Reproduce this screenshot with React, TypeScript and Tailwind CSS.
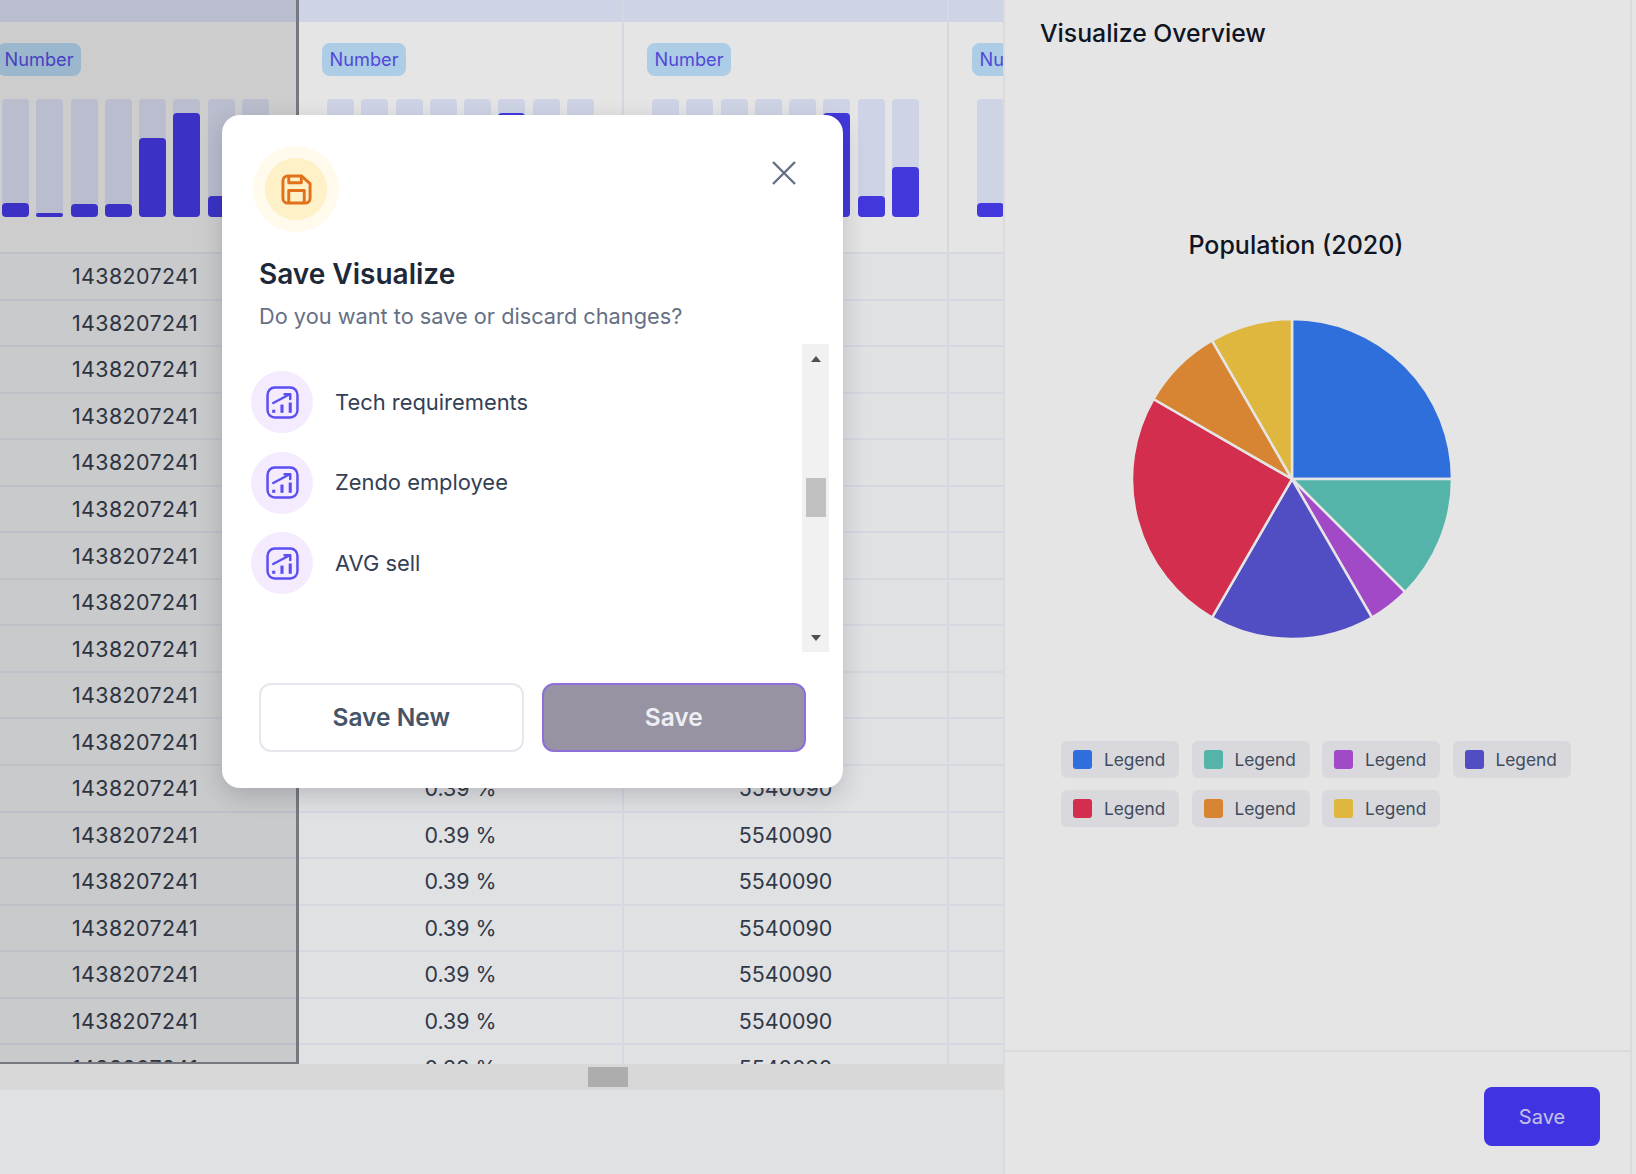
const rowCount = 18;

const columns = [
  { value: "1438207241", bars: [14, 4, 13, 13, 79, 104, 21, 10], frozen: true },
  { value: "0.39 %", bars: [6, 4, 8, 5, 3, 104, 30, 12], frozen: false },
  { value: "5540090", bars: [6, 4, 8, 5, 3, 104, 21, 50], frozen: false },
  { value: "", bars: [14, 4, 13, 13, 40, 60, 21, 10], frozen: false },
];

const slices = [
  { from: 0, to: 90, color: "#357cf5" },
  { from: 90, to: 135, color: "#5ec9be" },
  { from: 135, to: 150, color: "#b452de" },
  { from: 150, to: 210, color: "#5b56d8" },
  { from: 210, to: 300, color: "#ec3457" },
  { from: 300, to: 330, color: "#f09538" },
  { from: 330, to: 360, color: "#f9cb46" },
];

const legend = [
  "bg-[#357cf5]",
  "bg-[#5ec9be]",
  "bg-[#b452de]",
  "bg-[#5b56d8]",
  "bg-[#ec3457]",
  "bg-[#f09538]",
  "bg-[#f9cb46]",
];

const items = ["Tech requirements", "Zendo employee", "AVG sell"];

function slicePath(from: number, to: number) {
  const r = 160;
  const c = 162;
  const point = (deg: number) => {
    const rad = (deg * Math.PI) / 180;
    return `${c + r * Math.sin(rad)} ${c - r * Math.cos(rad)}`;
  };
  return `M${c} ${c} L${point(from)} A${r} ${r} 0 0 1 ${point(to)} Z`;
}

function Column({ value, bars, frozen }: { value: string; bars: number[]; frozen: boolean }) {
  return (
    <div
      className={
        frozen
          ? "relative h-[1064px] w-[325px] shrink-0 overflow-hidden border-r-[3px] border-b-2 border-[#85868e] tracking-[0.4px]"
          : "relative h-[1064px] w-[325px] shrink-0 overflow-hidden border-r-2 border-[#eef0fb]"
      }
    >
      <div className="h-[22px] bg-[#e6ebff]" />
      <div className="h-[232px] border-b-2 border-[#eef0fb] bg-white pt-[21px] pl-[23px]">
        <span className="inline-flex h-[33px] w-[84px] items-center justify-center rounded-lg bg-[#c1e4ff] text-[18.2px] tracking-normal text-[#5a52f2]">
          Number
        </span>
        <div className="mt-[23px] ml-[5px] flex gap-[7.3px]">
          {bars.map((h, i) => (
            <div key={i} className="flex h-[118px] w-[27px] flex-col justify-end rounded-sm bg-[#e6ebff]">
              <div className="rounded-sm bg-[#4a3ff5]" style={{ height: h }} />
            </div>
          ))}
        </div>
      </div>
      {Array.from({ length: rowCount }).map((_, i) => (
        <div
          key={i}
          className="flex h-[46.55px] items-center justify-center border-b-2 border-[#eef0fb] bg-[#fafbfd] text-[21.4px] text-[#374151]"
        >
          {value}
        </div>
      ))}
      {frozen && <div className="absolute inset-0 bg-black/10" />}
    </div>
  );
}

function ChartIcon() {
  return (
    <svg viewBox="0 0 32 32" className="h-[33px] w-[33px]" fill="none" stroke="#5b4ff2" strokeWidth="2.4" strokeLinecap="round" strokeLinejoin="round">
      <rect x="1.5" y="1.5" width="29" height="29" rx="7" />
      <path d="M7 16.5 L23 8" />
      <path d="M18 8 L23.5 8 L23.5 12.5" />
      <path d="M7.5 26v-3" strokeWidth="3" strokeLinecap="butt" />
      <path d="M15.5 26v-8" strokeWidth="3" strokeLinecap="butt" />
      <path d="M23.5 26v-10" strokeWidth="3" strokeLinecap="butt" />
    </svg>
  );
}

function SaveIcon() {
  return (
    <svg viewBox="0 0 32 32" className="h-[31px] w-[31px]" fill="none" stroke="#e2711a" strokeWidth="3" strokeLinejoin="round">
      <path d="M2 7a5 5 0 0 1 5-5h14l9 8v15a5 5 0 0 1-5 5H7a5 5 0 0 1-5-5Z" />
      <path d="M8 2v7h13V3" />
      <path d="M8 30V17h16v13" />
    </svg>
  );
}

function Modal() {
  return (
    <div className="absolute left-[222px] top-[115px] h-[673px] w-[621px] rounded-[18px] bg-white pt-[31px] shadow-[0_8px_24px_rgba(16,24,40,0.18)]">
      <button className="absolute right-[47px] top-[46px] text-[#667085]">
        <svg viewBox="0 0 24 24" className="h-[24px] w-[24px]" fill="none" stroke="currentColor" strokeWidth="2.4">
          <path d="M1 1 L23 23 M23 1 L1 23" />
        </svg>
      </button>
      <div className="ml-[31px] flex h-[86px] w-[86px] items-center justify-center rounded-full bg-[#fffaeb]">
        <div className="flex h-[62px] w-[62px] items-center justify-center rounded-full bg-[#fef0c7]">
          <SaveIcon />
        </div>
      </div>
      <h2 className="mt-[26px] ml-[37px] text-[28px] leading-[32px] font-semibold text-[#1d2939]">Save Visualize</h2>
      <p className="mt-[12px] ml-[37px] text-[21.75px] leading-[28px] text-[#667085]">Do you want to save or discard changes?</p>
      <div className="mt-[14px] mr-[14px] ml-[29px] flex h-[308px] justify-between">
        <div className="flex flex-col gap-[18.6px] pt-[27px]">
          {items.map((item) => (
            <div key={item} className="flex items-center gap-[22px]">
              <div className="flex h-[62px] w-[62px] items-center justify-center rounded-full bg-[#f4ebff]">
                <ChartIcon />
              </div>
              <span className="text-[21.9px] font-normal text-[#344054]">{item}</span>
            </div>
          ))}
        </div>
        <div className="flex w-[27px] flex-col items-center bg-[#f1f1f1] pt-[12px] pb-[11px]">
          <svg viewBox="0 0 10 6" className="h-[6px] w-[10px]" fill="#505050">
            <path d="M5 0 L10 6 H0 Z" />
          </svg>
          <div className="mt-[116px] h-[39px] w-[20px] bg-[#c1c1c1]" />
          <svg viewBox="0 0 10 6" className="mt-auto h-[6px] w-[10px]" fill="#505050">
            <path d="M0 0 H10 L5 6 Z" />
          </svg>
        </div>
      </div>
      <div className="mt-[31px] flex gap-[18px] px-[37px]">
        <button className="h-[69px] w-[265px] rounded-xl border-2 border-[#e4e7ec] text-[24.5px] font-semibold text-[#475467]">
          Save New
        </button>
        <button className="h-[69px] w-[265px] rounded-xl border-2 border-[#8e6ed8] bg-[#9793a3] text-[24.5px] font-semibold text-[#eeeef3]">
          Save
        </button>
      </div>
    </div>
  );
}

export default function App() {
  return (
    <div className="relative flex h-[1174px] w-[1636px] overflow-hidden bg-white font-['Inter',sans-serif]">
      <div className="flex w-[1003px] shrink-0 flex-col bg-[#fafbfd]">
        <div className="flex h-[1064px] overflow-hidden">
          <div className="-ml-[26px] flex h-[1064px]">
            {columns.map((col, i) => (
              <Column key={i} {...col} />
            ))}
          </div>
        </div>
        <div className="flex h-[26px] items-center bg-[#f1f1f1]">
          <div className="ml-[588px] h-[20px] w-[40px] bg-[#c1c1c1]" />
        </div>
      </div>

      <div className="relative flex w-[629px] shrink-0 flex-col border-r-2 border-l-2 border-[#f4f4f4] bg-white">
        <div className="h-[1050px] pt-[17px] pl-[35px]">
          <h1 className="text-[24.8px] leading-[32px] font-medium text-[#111827]">Visualize Overview</h1>
          <div className="w-[512px]">
            <h3 className="mt-[180px] text-center text-[25px] leading-[32px] font-medium text-[#111827]">Population (2020)</h3>
            <div className="mt-[56px] flex justify-center pr-[8px]">
              <svg viewBox="0 0 324 324" className="h-[324px] w-[324px]">
                {slices.map((s) => (
                  <path key={s.from} d={slicePath(s.from, s.to)} fill={s.color} stroke="#ffffff" strokeWidth="2.5" strokeLinejoin="round" />
                ))}
              </svg>
            </div>
            <div className="mt-[100px] ml-[21px] flex w-[530px] flex-wrap gap-x-[12.5px] gap-y-[12px]">
              {legend.map((color) => (
                <div key={color} className="flex h-[37px] w-[118px] items-center gap-[12px] rounded-md bg-[#f1f1f6] pl-[12px]">
                  <span className={`h-[19px] w-[19px] rounded-[3px] ${color}`} />
                  <span className="text-[17.3px] text-[#475467]">Legend</span>
                </div>
              ))}
            </div>
          </div>
        </div>
        <div className="flex flex-1 justify-end border-t-2 border-[#f4f4f4] pt-[35px] pr-[30px]">
          <button className="h-[59px] w-[116px] rounded-lg bg-[#4739fc] text-[20px] text-white/80">Save</button>
        </div>
      </div>

      <div className="absolute inset-0 bg-black/10" />
      <Modal />
    </div>
  );
}
